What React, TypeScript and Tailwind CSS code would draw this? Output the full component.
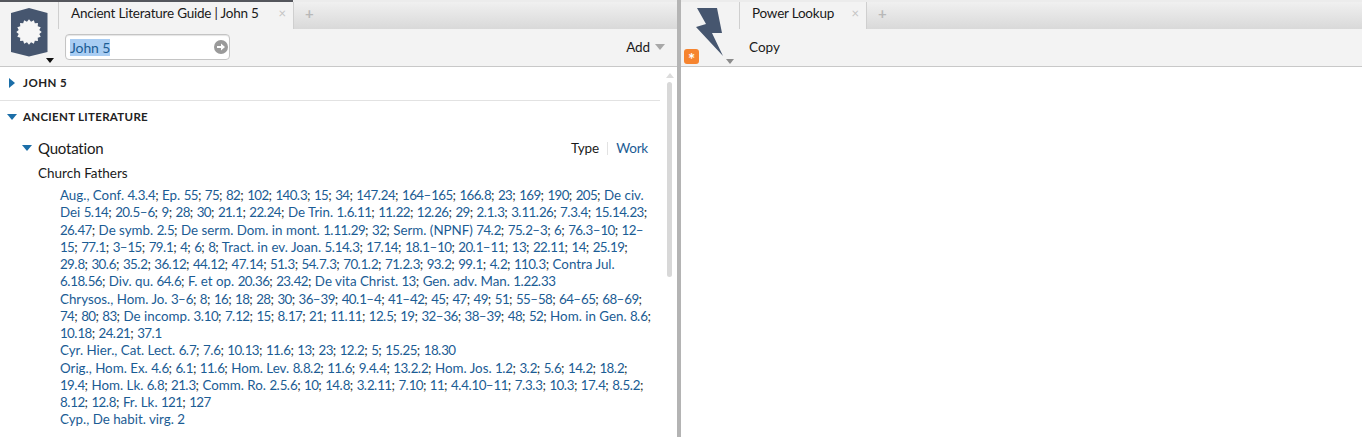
import React from "react";

const lines = [
  "Aug., Conf. 4.3.4; Ep. 55; 75; 82; 102; 140.3; 15; 34; 147.24; 164–165; 166.8; 23; 169; 190; 205; De civ.",
  "Dei 5.14; 20.5–6; 9; 28; 30; 21.1; 22.24; De Trin. 1.6.11; 11.22; 12.26; 29; 2.1.3; 3.11.26; 7.3.4; 15.14.23;",
  "26.47; De symb. 2.5; De serm. Dom. in mont. 1.11.29; 32; Serm. (NPNF) 74.2; 75.2–3; 6; 76.3–10; 12–",
  "15; 77.1; 3–15; 79.1; 4; 6; 8; Tract. in ev. Joan. 5.14.3; 17.14; 18.1–10; 20.1–11; 13; 22.11; 14; 25.19;",
  "29.8; 30.6; 35.2; 36.12; 44.12; 47.14; 51.3; 54.7.3; 70.1.2; 71.2.3; 93.2; 99.1; 4.2; 110.3; Contra Jul.",
  "6.18.56; Div. qu. 64.6; F. et op. 20.36; 23.42; De vita Christ. 13; Gen. adv. Man. 1.22.33",
  "Chrysos., Hom. Jo. 3–6; 8; 16; 18; 28; 30; 36–39; 40.1–4; 41–42; 45; 47; 49; 51; 55–58; 64–65; 68–69;",
  "74; 80; 83; De incomp. 3.10; 7.12; 15; 8.17; 21; 11.11; 12.5; 19; 32–36; 38–39; 48; 52; Hom. in Gen. 8.6;",
  "10.18; 24.21; 37.1",
  "Cyr. Hier., Cat. Lect. 6.7; 7.6; 10.13; 11.6; 13; 23; 12.2; 5; 15.25; 18.30",
  "Orig., Hom. Ex. 4.6; 6.1; 11.6; Hom. Lev. 8.8.2; 11.6; 9.4.4; 13.2.2; Hom. Jos. 1.2; 3.2; 5.6; 14.2; 18.2;",
  "19.4; Hom. Lk. 6.8; 21.3; Comm. Ro. 2.5.6; 10; 14.8; 3.2.11; 7.10; 11; 4.4.10–11; 7.3.3; 10.3; 17.4; 8.5.2;",
  "8.12; 12.8; Fr. Lk. 121; 127",
  "Cyp., De habit. virg. 2",
];

function RefLine({ text }: { text: string }) {
  const parts = text.split(/(;|[0-9]+)/).filter(Boolean);
  return (
    <div className="h-[17.25px] whitespace-pre leading-[17.25px]">
      {parts.map((p, i) =>
        p === ";" ? (
          <span key={i} className="text-[#333333]">;</span>
        ) : /^[0-9]/.test(p) ? (
          <span key={i} className="tracking-[-0.62px] text-[#1b5c94]">{p}</span>
        ) : (
          <span key={i} className="text-[#1b5c94]">{p}</span>
        )
      )}
    </div>
  );
}

function Hex() {
  const pts: string[] = [];
  for (let i = 0; i < 32; i++) {
    const r = i % 2 ? 10.5 : 12.7;
    const a = (i * Math.PI) / 16;
    pts.push(`${(18 + r * Math.sin(a)).toFixed(2)},${(24 - r * Math.cos(a)).toFixed(2)}`);
  }
  return (
    <svg width="37" height="49" viewBox="0 0 37 49">
      <path d="M18 0 L36.5 5 V44 L18 48.5 L0 44 V5 Z" fill="#46566f" />
      <polygon points={pts.join(" ")} fill="#f6f6f6" />
    </svg>
  );
}

function Tri({ dir, color, size = 5 }: { dir: "down" | "right"; color: string; size?: number }) {
  return dir === "down" ? (
    <svg width={size * 2} height={size + 1} viewBox="0 0 10 6"><path d="M0 0H10L5 6Z" fill={color} /></svg>
  ) : (
    <svg width={size + 1} height={size * 2} viewBox="0 0 6 10"><path d="M0 0L6 5L0 10Z" fill={color} /></svg>
  );
}

function TabBar({ title, left, tabW }: { title: string; left: number; tabW: number }) {
  return (
    <div className="flex h-[27px] items-stretch bg-gradient-to-b from-[#f0f0f0] to-[#d9d9d9]">
      <div className="flex-none bg-[#f3f3f3]" style={{ width: left }} />
      <div className="flex flex-none items-center border-x border-[#cfcfcf] bg-[#f3f3f3] pb-[4px] pl-3" style={{ width: tabW }}>
        <span className="text-[13.5px] tracking-[-0.22px] text-[#1a1a1a]">{title}</span>
        <span className="ml-auto mr-[7px] text-[13px] leading-none text-[#c4c4c4]">×</span>
      </div>
      <span className="ml-[11px] text-[15px] font-bold leading-[23px] text-[#b8b8b8]">+</span>
    </div>
  );
}

export default function App() {
  return (
    <div className="flex h-[437px] w-[1362px] overflow-hidden bg-white font-['Lato',sans-serif] text-[#1a1a1a]">
      <div className="flex w-[677px] flex-none flex-col">
        <div className="relative h-[67px] flex-none border-b border-[#c8c8c8] bg-[#f3f3f3]">
          <div className="flex h-[2px]">
            <div className="w-[293px] bg-[#54565c]" />
            <div className="flex-1 bg-[#ececec]" />
          </div>
          <TabBar title="Ancient Literature Guide | John 5" left={58} tabW={236} />
          <div className="flex h-[37px] items-center pb-[1px] pl-[65px] pr-[12px]">
            <div className="flex h-[26px] w-[165px] items-center rounded-[4px] border border-[#c4c4c4] bg-white pl-[4px] pr-[1px] shadow-[inset_0_1px_1px_#e5e5e5]">
              <span className="bg-[#a9cdf3] text-[14px] leading-[17px] tracking-[-0.1px] text-[#1b5c94]">John 5</span>
              <span className="ml-auto flex h-[14px] w-[14px] items-center justify-center rounded-full bg-[#9a9a9a]">
                <svg width="10" height="10" viewBox="0 0 10 10"><path d="M1 4H5V1.5L9 5L5 8.5V6H1Z" fill="#fff" /></svg>
              </span>
            </div>
            <span className="ml-auto text-[13.5px] tracking-[-0.1px]">Add</span>
            <span className="ml-[5px]"><Tri dir="down" color="#a8a8a8" /></span>
          </div>
          <div className="absolute left-[11px] top-[8px]"><Hex /></div>
          <div className="absolute left-[46px] top-[58px]"><Tri dir="down" color="#111" size={4} /></div>
        </div>
        <div className="flex min-h-0 flex-1">
          <div className="min-w-0 flex-1">
            <div className="mr-[2px] flex h-[34px] items-center border-b border-[#e2e2e2] pb-[1px] pl-[9px]">
              <Tri dir="right" color="#1b6ea8" />
              <span className="ml-[8px] text-[11.5px] font-bold tracking-[0.45px] text-[#222]">JOHN 5</span>
            </div>
            <div className="flex h-[32px] items-center pl-[7px]">
              <Tri dir="down" color="#1b6ea8" />
              <span className="ml-[6px] text-[11.5px] font-bold tracking-[0.3px] text-[#222]">ANCIENT LITERATURE</span>
            </div>
            <div className="flex h-[30px] items-center pl-[22px] pr-[14px]">
              <Tri dir="down" color="#1b6ea8" />
              <span className="ml-[6px] text-[15px] tracking-[-0.2px]">Quotation</span>
              <span className="ml-auto text-[13.5px] tracking-[-0.05px]">Type</span>
              <span className="mx-[8px] h-[13px] w-px bg-[#e2e2e2]" />
              <span className="text-[13.5px] tracking-[-0.2px] text-[#1b5c94]">Work</span>
            </div>
            <div className="pl-[38px] text-[13.5px] leading-[20px]">Church Fathers</div>
            <div className="pl-[60px] pt-[4px] text-[13.35px]">
              {lines.map((l, i) => <RefLine key={i} text={l} />)}
            </div>
          </div>
          <div className="flex w-[15px] flex-none flex-col items-center pt-[6px]">
            <svg width="8" height="5" viewBox="0 0 8 5"><path d="M0 5H8L4 0Z" fill="#dcdcdc" /></svg>
            <div className="mt-[4px] h-[195px] w-[5px] rounded-full bg-[#d8d8d8]" />
          </div>
        </div>
      </div>
      <div className="w-[4px] flex-none bg-[#b4b4b4]" />
      <div className="flex flex-1 flex-col">
        <div className="relative h-[67px] flex-none border-b border-[#c8c8c8] bg-[#f3f3f3]">
          <div className="h-[2px] bg-[#ececec]" />
          <TabBar title="Power Lookup" left={58} tabW={128} />
          <div className="flex h-[37px] items-center pb-[1px] pl-[68px]">
            <span className="text-[13.5px]">Copy</span>
          </div>
          <div className="absolute left-[15px] top-[8px]">
            <svg width="28" height="49" viewBox="0 0 28 49">
              <path d="M1 0H21L26 25H16L27 48L0 19L10 16Z" fill="#46566f" />
            </svg>
          </div>
          <div className="absolute left-[45px] top-[59px]"><Tri dir="down" color="#8c8c8c" size={4} /></div>
          <div className="absolute left-[3px] top-[49px] flex h-[15px] w-[15px] items-start justify-center rounded-[3px] bg-[#f6842f] pt-[2px] text-[17px] font-bold leading-[17px] text-white">*</div>
        </div>
        <div className="flex-1 bg-white" />
      </div>
    </div>
  );
}
